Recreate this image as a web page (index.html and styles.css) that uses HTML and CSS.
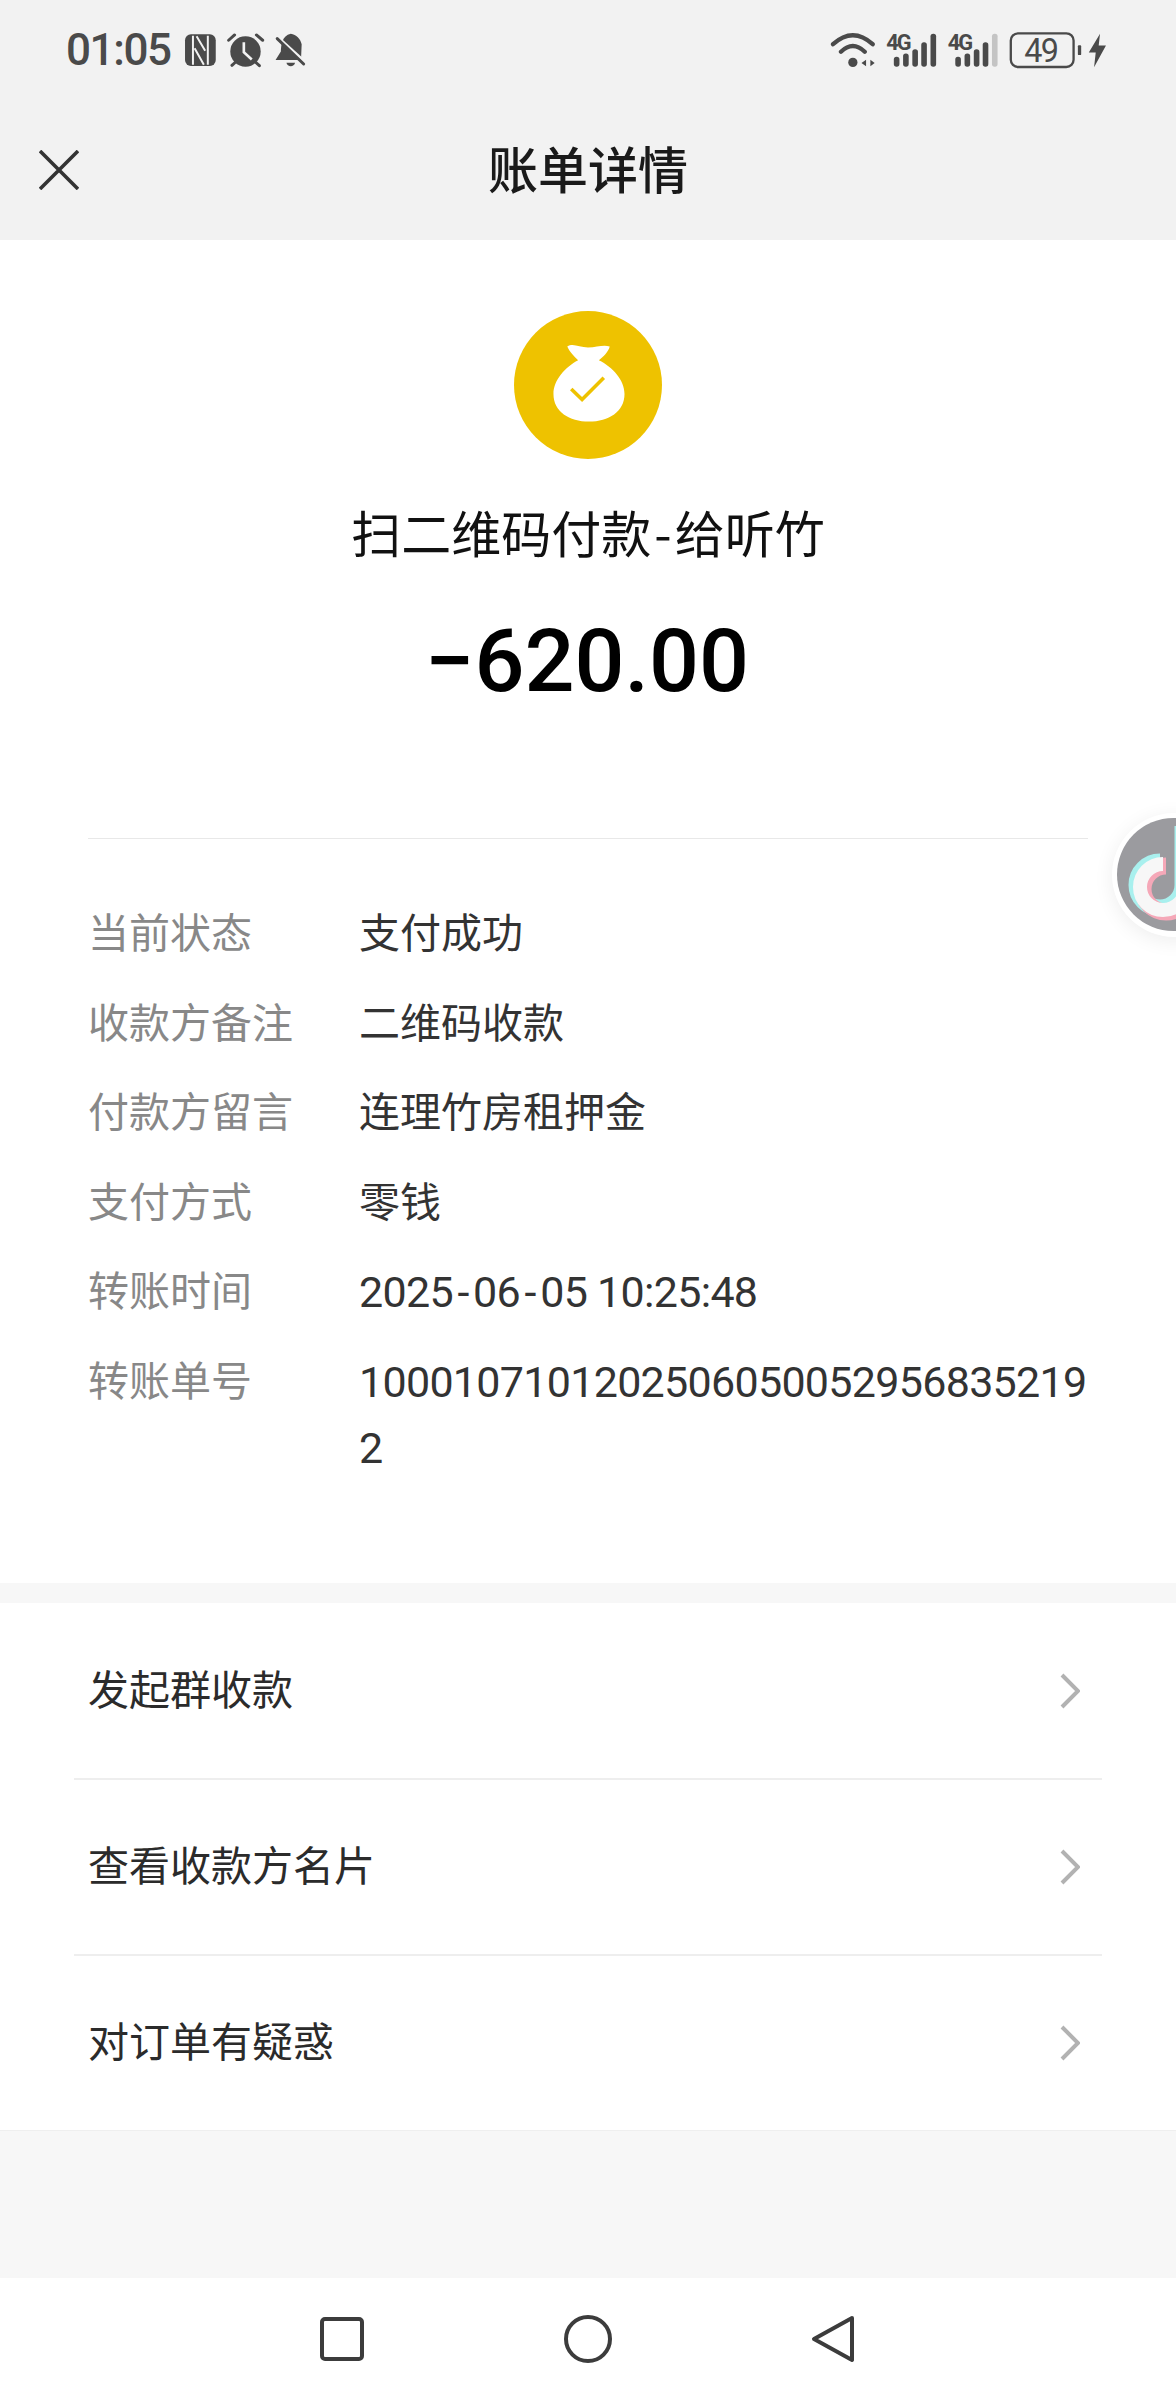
FILE: index.html
```html
<!DOCTYPE html>
<html lang="zh-CN">
<head>
    <meta charset="UTF-8">
    <meta name="viewport" content="width=device-width, initial-scale=1.0">
    <title>账单详情</title>
    <link rel="stylesheet" href="styles.css">
</head>
<body>
    <div class="page">
        <header class="top">
            <div class="status-bar">
                <div class="status-left">
                    <span class="clock">01:05</span>
                    <svg class="status-icons-left" viewBox="550 90 370 115">
                        <!-- NFC -->
                        <rect x="555" y="100" width="93" height="96" rx="18" fill="#4a4a4a"/>
                        <path d="M579 104V192M624 104V192M590 106L616 150M584 142L612 192" stroke="#f2f2f2" stroke-width="6" fill="none"/>
                        <!-- alarm -->
                        <circle cx="738" cy="152" r="46" fill="#4a4a4a"/>
                        <path d="M733 124V154L757 176" stroke="#f2f2f2" stroke-width="8" fill="none"/>
                        <path d="M687 118L705 102M771 102L790 118M697 194L709 183M767 183L780 195" stroke="#4a4a4a" stroke-width="9" stroke-linecap="round"/>
                        <!-- muted bell -->
                        <path d="M875 98C848 104 846 132 845 152L829 178H906L908 130C904 112 892 102 875 98Z" fill="#4a4a4a"/>
                        <path d="M862 186H888C886 200 864 200 862 186Z" fill="#4a4a4a"/>
                        <path d="M826 100L916 182" stroke="#f2f2f2" stroke-width="9"/>
                        <path d="M834 113L914 190" stroke="#4a4a4a" stroke-width="9" stroke-linecap="round"/>
                    </svg>
                </div>
                <svg class="status-icons-right" viewBox="160 90 845 115">
                    <defs>
                        <g id="bars">
                            <rect x="355" y="168" width="17" height="30" rx="8"/>
                            <rect x="383" y="158" width="17" height="40" rx="8"/>
                            <rect x="411" y="145" width="17" height="53" rx="8"/>
                            <rect x="438" y="124" width="17" height="74" rx="8"/>
                        </g>
                    </defs>
                    <!-- wifi -->
                    <path d="M171 130Q231 76 291 130M195 153Q231 118 267 153" stroke="#4a4a4a" stroke-width="13" fill="none" stroke-linecap="round"/>
                    <circle cx="231" cy="185" r="14" fill="#4a4a4a"/>
                    <path d="M257 187L271 177V197ZM297 187L284 177V197Z" fill="#4a4a4a"/>
                    <!-- sim 1 -->
                    <text class="net" x="332" y="148">4G</text>
                    <use href="#bars" fill="#4a4a4a"/>
                    <rect x="466" y="98" width="17" height="100" rx="8" fill="#4a4a4a"/>
                    <!-- sim 2 -->
                    <text class="net" x="518" y="148">4G</text>
                    <use href="#bars" x="186" fill="#4a4a4a"/>
                    <rect x="652" y="98" width="17" height="100" rx="8" fill="#c4c4c4"/>
                    <!-- battery -->
                    <rect x="709" y="97" width="190" height="102" rx="22" fill="none" stroke="#4a4a4a" stroke-width="7"/>
                    <text class="batt" x="800" y="185" text-anchor="middle">49</text>
                    <rect x="912" y="133" width="10" height="30" rx="3" fill="#4a4a4a"/>
                    <path d="M979 98L945 155H966L961 200L997 134H975Z" fill="#4a4a4a"/>
                </svg>
            </div>
            <nav class="nav-bar">
                <svg class="close-icon" viewBox="0 0 40 40">
                    <path d="M1 1L39 39M39 1L1 39" stroke="#333" stroke-width="3.6" fill="none"/>
                </svg>
                <h1 class="nav-title">账单详情</h1>
            </nav>
        </header>

        <main class="bill">
            <section class="summary">
                <svg class="bag-icon" viewBox="0 0 150 150">
                    <circle cx="75" cy="75" r="75" fill="#eec200"/>
                    <path d="M54 36C60 32 66 37 75 37C84 37 90 34 97 36C96 41 90 47 86 50C100 57 112 70 112 84C112 102 96 112 76 112C56 112 40 102 40 84C40 70 52 57 65 50C61 46 56 41 54 36Z" fill="#fff"/>
                    <path d="M58 79L69 89.7L91 67.7" fill="none" stroke="#eec200" stroke-width="3.6"/>
                </svg>
                <div class="pay-title">扫二维码付款<span class="title-dash">-</span>给听竹</div>
                <div class="amount">−620.00</div>
            </section>

            <section class="details">
                <div class="row"><span class="label">当前状态</span><span class="value">支付成功</span></div>
                <div class="row"><span class="label">收款方备注</span><span class="value">二维码收款</span></div>
                <div class="row"><span class="label">付款方留言</span><span class="value">连理竹房租押金</span></div>
                <div class="row"><span class="label">支付方式</span><span class="value">零钱</span></div>
                <div class="row"><span class="label">转账时间</span><span class="value num">2025<span class="dash">-</span>06<span class="dash">-</span>05 10:25:48</span></div>
                <div class="row"><span class="label">转账单号</span><span class="value num">10001071012025060500529568352192</span></div>
            </section>

            <section class="menu">
                <div class="menu-item">
                    <span class="menu-text">发起群收款</span>
                    <svg class="chevron" viewBox="0 0 20 36"><path d="M2 2L18 18L2 34"/></svg>
                </div>
                <div class="menu-item">
                    <span class="menu-text">查看收款方名片</span>
                    <svg class="chevron" viewBox="0 0 20 36"><path d="M2 2L18 18L2 34"/></svg>
                </div>
                <div class="menu-item">
                    <span class="menu-text">对订单有疑惑</span>
                    <svg class="chevron" viewBox="0 0 20 36"><path d="M2 2L18 18L2 34"/></svg>
                </div>
            </section>
            <div class="filler"></div>
        </main>

        <footer class="sys-nav">
            <svg class="sys-icon" viewBox="0 0 48 48"><rect x="4" y="4" width="40" height="40" rx="3"/></svg>
            <svg class="sys-icon" viewBox="0 0 48 48"><circle cx="24" cy="24" r="22"/></svg>
            <svg class="sys-icon" viewBox="0 0 48 48"><path d="M42 3L4 24L42 45Z" stroke-linejoin="round"/></svg>
        </footer>

        <!-- floating tiktok bubble -->
        <div class="float-bubble">
            <svg viewBox="0 0 113 113">
                <circle cx="56.5" cy="56.5" r="56.5" fill="#9b9b9f"/>
                <path d="M43 44A23 23 0 1 0 66 67V8" fill="none" stroke="#a9f0ee" stroke-width="17"/>
                <path d="M49 48A23 23 0 1 0 72 71V14" fill="none" stroke="#f5a8b8" stroke-width="17"/>
                <path d="M46 46A23 23 0 1 0 69 69V11" fill="none" stroke="#f7f7f7" stroke-width="14"/>
            </svg>
        </div>
    </div>
</body>
</html>
```

FILE: styles.css
```css
* {
    box-sizing: border-box;
}

body {
    margin: 0;
    font-family: "Noto Sans CJK SC", "Noto Sans", sans-serif;
    background-color: #fff;
}

.page {
    position: relative;
    display: flex;
    flex-direction: column;
    width: 1176px;
    height: 2400px;
    overflow: hidden;
}

/* Status bar and title */
.top {
    background-color: #f2f2f2;
}

.status-bar {
    display: flex;
    justify-content: space-between;
    align-items: center;
    height: 100px;
    padding: 0 66px;
}

.status-left {
    display: flex;
    align-items: center;
    gap: 12px;
}

.clock {
    font-family: Roboto, sans-serif;
    font-size: 44px;
    font-weight: 500;
    letter-spacing: -1.4px;
    color: #4a4a4a;
}

.status-icons-left {
    width: 123px;
    height: 38px;
}

.status-icons-right {
    width: 282px;
    height: 38px;
}

.net {
    font-family: Roboto, sans-serif;
    font-size: 66px;
    font-weight: 700;
    letter-spacing: -6px;
    fill: #4a4a4a;
}

.batt {
    font-family: Roboto, sans-serif;
    font-size: 98px;
    letter-spacing: -5px;
    fill: #4a4a4a;
}

.nav-bar {
    position: relative;
    display: flex;
    align-items: center;
    justify-content: center;
    height: 140px;
    padding-bottom: 6px;
}

.close-icon {
    position: absolute;
    left: 39px;
    top: 50px;
    width: 40px;
    height: 40px;
}

.nav-title {
    margin: 0;
    font-size: 50px;
    font-weight: 500;
    color: #1a1a1a;
}

/* Bill body */
.bill {
    flex: 1;
    display: flex;
    flex-direction: column;
}

.summary {
    display: flex;
    flex-direction: column;
    align-items: center;
    height: 599px;
    margin: 0 88px;
    padding-top: 71px;
    border-bottom: 1px solid #e8e8e8;
}

.bag-icon {
    width: 150px;
    height: 148px;
}

.pay-title {
    margin-top: 36px;
    font-size: 50px;
    line-height: 72px;
    color: #111;
}

.title-dash {
    margin: 0 3px;
}

.amount {
    margin-top: 41px;
    padding-right: 2px;
    font-family: Roboto, sans-serif;
    font-size: 88px;
    font-weight: 500;
    line-height: 106px;
    color: #000;
}

.details {
    height: 764px;
    padding: 62px 88px 0;
    border-bottom: 20px solid #f7f7f7;
}

.row {
    display: flex;
    padding-bottom: 23.5px;
    font-family: Roboto, "Noto Sans CJK SC", sans-serif;
    font-size: 41px;
    line-height: 66px;
}

.label {
    flex: none;
    width: 271px;
    color: #888;
}

.value {
    flex: 1;
    color: #333;
    word-break: break-all;
}

.num {
    font-size: 43px;
    letter-spacing: -0.7px;
}

.dash {
    margin: 0 4.5px;
}

/* Link rows */
.menu {
    padding: 0 74px;
}

.menu-item {
    display: flex;
    justify-content: space-between;
    align-items: center;
    height: 176px;
    padding: 0 22px 0 14px;
    font-size: 41px;
    color: #2b2b2b;
    border-bottom: 2px solid #eee;
}

.menu-item:first-child {
    height: 177px;
}

.menu-item:last-child {
    height: 174px;
    border-bottom: none;
}

.menu-text {
    padding-bottom: 8px;
}

.chevron {
    width: 20px;
    height: 36px;
}

.chevron path {
    fill: none;
    stroke: #b2b2b2;
    stroke-width: 4;
}

.filler {
    flex: 1;
    background-color: #f7f7f7;
    border-top: 1px solid #efefef;
}

/* Android nav buttons */
.sys-nav {
    display: flex;
    justify-content: space-between;
    align-items: center;
    height: 122px;
    padding: 0 318px 0 318px;
    background-color: #fff;
}

.sys-icon {
    width: 48px;
    height: 48px;
    fill: none;
    stroke: #3c3c3c;
    stroke-width: 4;
}

.float-bubble {
    position: absolute;
    left: 1112px;
    top: 813px;
    width: 124px;
    height: 124px;
    padding: 5px;
    border-radius: 50%;
    background-color: #fff;
    box-shadow: 0 4px 20px rgba(0, 0, 0, 0.07);
}

.float-bubble svg {
    display: block;
    width: 113px;
    height: 113px;
}
```
